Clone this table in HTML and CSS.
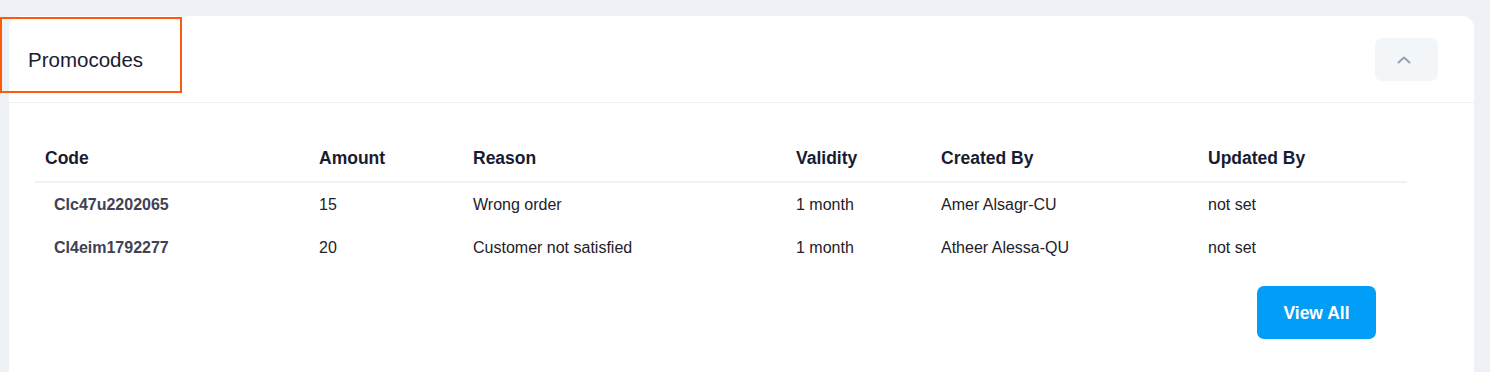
FILE: index.html
```html
<!DOCTYPE html>
<html lang="en">
<head>
<meta charset="utf-8">
<title>Promocodes</title>
<link rel="stylesheet" href="styles.css">
</head>
<body>
<div class="page">
  <section class="card">
    <header class="card-header">
      <h3 class="card-title">Promocodes</h3>
      <button class="collapse-btn" type="button" aria-label="Collapse">
        <svg class="chevron" width="14" height="8" viewBox="0 0 14 8"><path d="M1.5 6.5 L7 1.5 L12.5 6.5" fill="none" stroke="#9aa0b4" stroke-width="2" stroke-linecap="round" stroke-linejoin="round"/></svg>
      </button>
      <div class="highlight"></div>
    </header>
    <div class="card-body">
      <table class="promo-table">
        <colgroup>
          <col class="c-code"><col class="c-amount"><col class="c-reason"><col class="c-validity"><col class="c-created"><col class="c-updated">
        </colgroup>
        <thead>
          <tr><th>Code</th><th>Amount</th><th>Reason</th><th>Validity</th><th>Created By</th><th>Updated By</th></tr>
        </thead>
        <tbody>
          <tr><td><span class="code">Clc47u2202065</span></td><td>15</td><td>Wrong order</td><td>1 month</td><td>Amer Alsagr-CU</td><td>not set</td></tr>
          <tr><td><span class="code">Cl4eim1792277</span></td><td>20</td><td>Customer not satisfied</td><td>1 month</td><td>Atheer Alessa-QU</td><td>not set</td></tr>
        </tbody>
      </table>
      <div class="actions">
        <button class="view-all" type="button">View All</button>
      </div>
    </div>
  </section>
</div>
</body>
</html>
```

FILE: styles.css
```css
html, body {
  margin: 0;
  padding: 0;
}
body {
  background: #eef1f5;
  font-family: "Liberation Sans", Arial, sans-serif;
}
.page {
  box-sizing: border-box;
  height: 372px;
  padding: 16px 16px 0 9px;
  overflow: hidden;
}
.card {
  background: #ffffff;
  border-radius: 12px 12px 0 0;
  height: 100%;
}
.card-header {
  position: relative;
  height: 86px;
  border-bottom: 1px solid #eff2f5;
  display: flex;
  align-items: center;
  justify-content: space-between;
  padding: 0 36px 0 19px;
}
.card-title {
  margin: 2px 0 0;
  font-size: 20.5px;
  font-weight: 400;
  color: #181c32;
}
.collapse-btn {
  width: 63px;
  height: 43px;
  margin-top: 1px;
  border: none;
  border-radius: 7px;
  background: #f3f6f9;
  display: flex;
  align-items: center;
  justify-content: center;
  padding: 0;
}
.chevron {
  margin-right: 6px;
}
.highlight {
  position: absolute;
  left: -9px;
  top: 1px;
  width: 178px;
  height: 72px;
  border: 2px solid #ff5a0a;
}
.card-body {
  padding: 30px 67px 0 26px;
}
.promo-table {
  width: 100%;
  border-collapse: collapse;
  table-layout: fixed;
}
.c-code { width: 274px; }
.c-amount { width: 154px; }
.c-reason { width: 323px; }
.c-validity { width: 145px; }
.c-created { width: 267px; }
.c-updated { width: 209px; }
.promo-table th {
  height: 49px;
  padding: 3px 10px 0;
  box-sizing: border-box;
  text-align: left;
  font-size: 17.5px;
  font-weight: 700;
  color: #181c32;
  border-bottom: 2px solid #eef1f5;
  vertical-align: middle;
}
.promo-table td {
  height: 43px;
  padding: 0 10px;
  font-size: 16px;
  color: #1e2129;
  vertical-align: middle;
}
.code {
  padding-left: 9px;
  font-weight: 700;
  color: #3f4254;
}
.actions {
  display: flex;
  justify-content: flex-end;
  padding-top: 17px;
  padding-right: 31px;
}
.view-all {
  width: 119px;
  height: 53px;
  padding: 2px 0 0;
  border: none;
  border-radius: 7px;
  background: #009ef7;
  color: #ffffff;
  font-family: "Liberation Sans", Arial, sans-serif;
  font-size: 17.5px;
  font-weight: 700;
}
```
